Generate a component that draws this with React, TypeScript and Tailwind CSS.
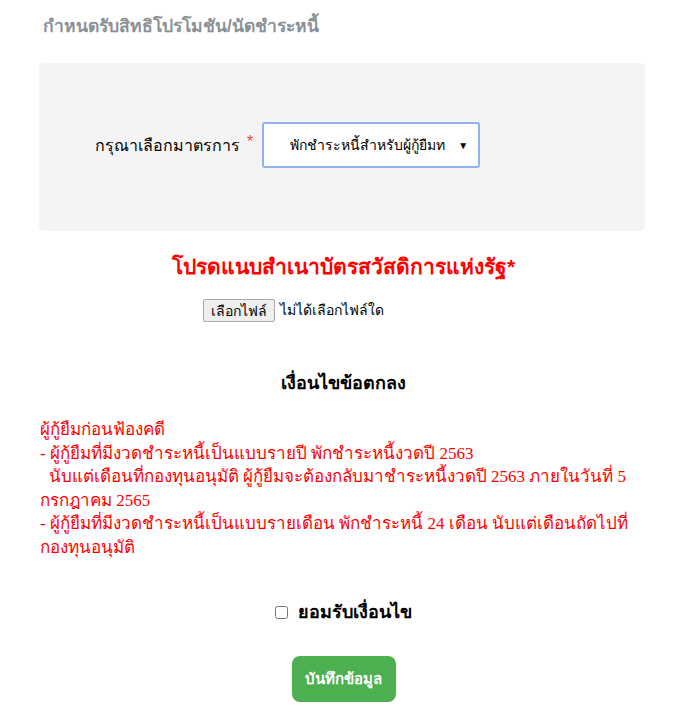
export default function App() {
  return (
    <div
      className="w-[687px] h-[716px] bg-white overflow-hidden"
      style={{ fontFamily: '"Liberation Sans", "Noto Sans", sans-serif' }}
    >
      {/* หัวข้อ */}
      <div className="pl-[43px] pt-[14px] text-[17.5px] font-bold text-[#8b9096] leading-[24px]">
        กำหนดรับสิทธิโปรโมชัน/นัดชำระหนี้
      </div>

      {/* กล่องเลือกมาตรการ */}
      <div className="ml-[39px] mr-[42px] mt-[25px] h-[168px] bg-[#f4f4f4] rounded-[5px] flex items-center">
        <div className="w-[201px] text-right text-[16px] text-black -mt-[3px]">กรุณาเลือกมาตรการ</div>
        <span className="ml-[7px] text-[#ff3b3b] text-[16px] self-center -mt-[10px]">*</span>
        <div className="ml-[9px] -mt-[4px] w-[218px] h-[46px] bg-white border-2 border-[#8fb3f0] rounded-[3px] flex items-center pl-[26px] pr-[10px]">
          <span className="flex-1 overflow-hidden whitespace-nowrap text-[14px] text-black">
            พักชำระหนี้สำหรับผู้กู้ยืมท
          </span>
          <span className="text-[10px] text-black ml-[8px]">▼</span>
        </div>
      </div>

      {/* แนบเอกสาร */}
      <div className="mt-[22px] text-center text-[21px] font-bold text-[#ff0000] leading-[28px]">
        โปรดแนบสำเนาบัตรสวัสดิการแห่งรัฐ*
      </div>
      <div className="mt-[18px] pl-[203px] flex items-center gap-[5px] text-[14px]">
        <button className="h-[23px] px-[7px] border border-[#a9a9a9] rounded-[2px] bg-[#efefef] text-black text-[14px] leading-none">
          เลือกไฟล์
        </button>
        <span className="text-black">ไม่ได้เลือกไฟล์ใด</span>
      </div>

      {/* เงื่อนไข */}
      <div className="mt-[49px] text-center text-[18px] font-bold text-black leading-[24px]">
        เงื่อนไขข้อตกลง
      </div>
      <div
        className="mt-[23px] pl-[40px] pr-[50px] text-[17px] leading-[23.5px] text-[#ff0000]"
        style={{ fontFamily: '"Liberation Serif", "Noto Sans", serif' }}
      >
        ผู้กู้ยืมก่อนฟ้องคดี
        <br />- ผู้กู้ยืมที่มีงวดชำระหนี้เป็นแบบรายปี พักชำระหนี้งวดปี 2563
        <br />
        &nbsp;&nbsp;นับแต่เดือนที่กองทุนอนุมัติ ผู้กู้ยืมจะต้องกลับมาชำระหนี้งวดปี 2563 ภายในวันที่ 5 กรกฎาคม 2565
        <br />- ผู้กู้ยืมที่มีงวดชำระหนี้เป็นแบบรายเดือน พักชำระหนี้ 24 เดือน นับแต่เดือนถัดไปที่กองทุนอนุมัติ
      </div>

      {/* ยอมรับ */}
      <div className="mt-[40px] flex items-center justify-center gap-[10px]">
        <input type="checkbox" className="w-[13px] h-[13px]" />
        <span className="text-[18px] font-bold text-black">ยอมรับเงื่อนไข</span>
      </div>
      <div className="mt-[30px] flex justify-center">
        <button className="w-[104px] h-[46px] rounded-[8px] bg-[#4caf50] text-white text-[15px] font-bold">
          บันทึกข้อมูล
        </button>
      </div>
    </div>
  );
}
